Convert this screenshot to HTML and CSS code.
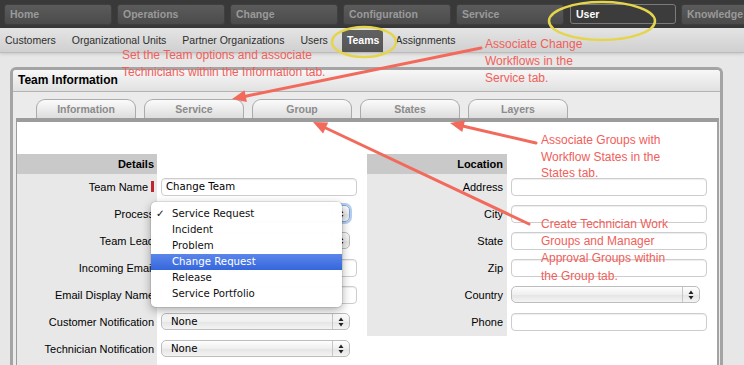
FILE: index.html
```html
<!DOCTYPE html>
<html>
<head>
<meta charset="utf-8">
<title>Team Information</title>
<link rel="stylesheet" href="styles.css">
</head>
<body>
<nav class="topnav">
  <a class="tnav">Home</a>
  <a class="tnav">Operations</a>
  <a class="tnav">Change</a>
  <a class="tnav">Configuration</a>
  <a class="tnav">Service</a>
  <a class="tnav active">User</a>
  <a class="tnav">Knowledge</a>
</nav>
<nav class="subnav">
  <a class="snav">Customers</a>
  <a class="snav">Organizational Units</a>
  <a class="snav">Partner Organizations</a>
  <a class="snav">Users</a>
  <a class="snav active">Teams</a>
  <a class="snav">Assignments</a>
</nav>
<main class="content">
  <section class="panel">
    <header class="panel-head">Team Information</header>
    <div class="panel-body">
      <div class="tabs">
        <div class="tab">Information</div>
        <div class="tab">Service</div>
        <div class="tab">Group</div>
        <div class="tab">States</div>
        <div class="tab">Layers</div>
      </div>
      <div class="tabpage">
        <div class="form">
          <div class="fgrid left">
            <div class="fhead">Details</div><div class="fblank"></div>
            <div class="flabel">Team Name<span class="req"></span></div>
            <div class="field"><div class="inp">Change Team</div></div>
            <div class="flabel">Process</div>
            <div class="field"><div class="sel focus">Service Request<svg class="arr" viewBox="0 0 6 10"><path d="M3 0.5L5.5 4H0.5Z M3 9.5L5.5 6H0.5Z"/></svg></div></div>
            <div class="flabel">Team Lead</div>
            <div class="field"><div class="sel"><svg class="arr" viewBox="0 0 6 10"><path d="M3 0.5L5.5 4H0.5Z M3 9.5L5.5 6H0.5Z"/></svg></div></div>
            <div class="flabel">Incoming Email</div>
            <div class="field"><div class="inp"></div></div>
            <div class="flabel">Email Display Name</div>
            <div class="field"><div class="inp"></div></div>
            <div class="flabel">Customer Notification</div>
            <div class="field"><div class="sel">None<svg class="arr" viewBox="0 0 6 10"><path d="M3 0.5L5.5 4H0.5Z M3 9.5L5.5 6H0.5Z"/></svg></div></div>
            <div class="flabel">Technician Notification</div>
            <div class="field"><div class="sel">None<svg class="arr" viewBox="0 0 6 10"><path d="M3 0.5L5.5 4H0.5Z M3 9.5L5.5 6H0.5Z"/></svg></div></div>
          </div>
          <div class="fgrid right">
            <div class="fhead">Location</div><div class="fblank"></div>
            <div class="flabel">Address</div>
            <div class="field"><div class="inp"></div></div>
            <div class="flabel">City</div>
            <div class="field"><div class="inp"></div></div>
            <div class="flabel">State</div>
            <div class="field"><div class="inp"></div></div>
            <div class="flabel">Zip</div>
            <div class="field"><div class="inp"></div></div>
            <div class="flabel">Country</div>
            <div class="field"><div class="sel"><svg class="arr" viewBox="0 0 6 10"><path d="M3 0.5L5.5 4H0.5Z M3 9.5L5.5 6H0.5Z"/></svg></div></div>
            <div class="flabel">Phone</div>
            <div class="field"><div class="inp"></div></div>
          </div>
        </div>
      </div>
    </div>
  </section>
</main>

<ul class="menu">
  <li class="mi"><span class="check">✓</span>Service Request</li>
  <li class="mi">Incident</li>
  <li class="mi">Problem</li>
  <li class="mi hl">Change Request</li>
  <li class="mi">Release</li>
  <li class="mi">Service Portfolio</li>
</ul>

<svg class="overlay" width="744" height="365" viewBox="0 0 744 365">
  <ellipse class="ring" cx="364" cy="42" rx="32" ry="15"/>
  <ellipse class="ring" cx="602" cy="21" rx="53" ry="19"/>
  <line class="arrow" x1="481" y1="48" x2="245.7" y2="96.2"/>
  <polygon class="head" points="232,99 244.5,90.3 246.9,102.1"/>
  <line class="arrow" x1="536" y1="143" x2="463.6" y2="126.2"/>
  <polygon class="head" points="450,123 465,120.3 462.3,132"/>
  <line class="arrow" x1="529" y1="224" x2="325.7" y2="128"/>
  <polygon class="head" points="313,122 328.2,122.6 323.1,133.4"/>
</svg>

<div class="note n1">Set the Team options and associate<br>Technicians within the Information tab.</div>
<div class="note n2">Associate Change<br>Workflows in the<br>Service tab.</div>
<div class="note n3">Associate Groups with<br>Workflow States in the<br>States tab.</div>
<div class="note n4">Create Technician Work<br>Groups and Manager<br>Approval Groups within<br>the Group tab.</div>
</body>
</html>
```

FILE: styles.css
```css
* { box-sizing: border-box; margin: 0; padding: 0; }
html, body { width: 744px; height: 365px; overflow: hidden; }
body {
  position: relative;
  background: #e7e7e7;
  font-family: "Liberation Sans", Arial, sans-serif;
  color: #111;
}

/* top navigation */
.topnav {
  display: flex;
  gap: 5px;
  height: 28px;
  padding: 4px 0 0 4px;
  background: #393939;
  overflow: hidden;
}
.tnav {
  flex: 0 0 108px;
  height: 21px;
  padding-left: 5px;
  border: 1px solid #3f3f3f;
  border-radius: 3px;
  background: linear-gradient(#5b5b5b, #4b4b4b);
  color: #9a9a9a;
  font-size: 10.5px;
  font-weight: bold;
  line-height: 19px;
}
.tnav.active {
  flex-basis: 106px;
  height: 20px;
  border: 1px solid #7b7b7b;
  background: #3c3c3c;
  color: #fff;
  margin-left: 1px;
}

/* sub navigation */
.subnav {
  display: flex;
  align-items: flex-end;
  height: 25px;
  background: linear-gradient(#e4e4e4, #d0d0d0);
  border-bottom: 1px solid #bcbcbc;
  box-shadow: 0 1px 3px rgba(0,0,0,0.15);
}
.snav {
  padding: 0 5px;
  margin-right: 6px;
  height: 22px;
  line-height: 20px;
  font-size: 10.5px;
  color: #2e2e2e;
}
.snav.active {
  margin-left: 3px;
  margin-right: 7px;
  padding: 0 4px 0 5px;
  background: linear-gradient(#616161, #555);
  color: #fff;
  font-weight: bold;
  border-radius: 3px 3px 0 0;
}

/* panel */
.content { padding: 14px 0 0 10px; }
.panel {
  width: 713px;
  height: 298px;
  overflow: hidden;
  border: 3px solid #a4a4a4;
  border-bottom: 0;
  border-radius: 6px 6px 0 0;
  background: #ebebeb;
}
.panel-head {
  height: 22px;
  padding-left: 5px;
  border-bottom: 1px solid #b3b3b3;
  background: linear-gradient(#f7f7f7, #e1e1e1);
  font-size: 12px;
  font-weight: bold;
  line-height: 21px;
  color: #000;
}
.panel-body { padding: 7px 1px 0 3px; }

.tabs {
  display: flex;
  gap: 8px;
  padding-left: 20px;
  height: 19px;
}
.tab {
  width: 100px;
  height: 19px;
  border: 1px solid #ababab;
  border-bottom: 0;
  border-radius: 9px 9px 0 0;
  background: linear-gradient(#fbfbfb, #dddddd);
  color: #8b8b8b;
  font-size: 10.5px;
  font-weight: bold;
  text-align: center;
  line-height: 19px;
}
.tabpage {
  height: 247px;
  overflow: hidden;
  padding-top: 32px;
  border-top: 4px solid #9c9c9c;
  border-left: 1px solid #9c9c9c;
  border-right: 2px solid #a3a3a3;
  background: #fff;
}

/* form */
.form { display: flex; align-items: flex-start; gap: 10px; }
.fgrid {
  display: grid;
  grid-template-columns: 140px 200px;
  grid-template-rows: 20px;
  grid-auto-rows: 27px;
}
.left {
  background: linear-gradient(to right, #e8e8e8 140px, transparent 140px);
  padding-bottom: 4px;
}
.fhead {
  background: #c9c9c9;
  font-size: 11px;
  font-weight: bold;
  text-align: right;
  padding-right: 3px;
  line-height: 20px;
  color: #000;
}
.fblank { background: #fff; }
.flabel {
  background: #e8e8e8;
  font-size: 11px;
  text-align: right;
  padding-right: 3px;
  line-height: 27px;
  color: #000;
  white-space: nowrap;
}
.right .flabel, .right .fhead { padding-right: 4px; }
.field { padding: 4px 0 0 4px; }

.req {
  display: inline-block;
  width: 3px;
  height: 11px;
  margin-left: 3px;
  vertical-align: -1px;
  background: #c0262c;
}

.inp {
  width: 196px;
  height: 18px;
  padding-left: 4px;
  border: 1px solid #cdcdcd;
  border-radius: 4px;
  background: #fff;
  box-shadow: inset 0 1px 1px rgba(0,0,0,0.07);
  font-family: "DejaVu Sans", sans-serif;
  font-size: 10.2px;
  line-height: 16px;
  color: #000;
}
.sel {
  position: relative;
  width: 189px;
  height: 17px;
  padding-left: 9px;
  border: 1px solid #bdbdbd;
  border-radius: 5px;
  background: linear-gradient(#fefefe, #efefef 50%, #e4e4e4 51%, #f4f4f4);
  font-family: "DejaVu Sans", sans-serif;
  font-size: 10.2px;
  line-height: 15px;
  color: #000;
}
.sel::before {
  content: "";
  position: absolute;
  top: 0;
  bottom: 0;
  right: 16px;
  width: 1px;
  background: #c6c6c6;
}
.sel.focus {
  border-color: #7ea7da;
  box-shadow: 0 0 0 2px rgba(120,165,225,0.55);
}
.arr {
  position: absolute;
  right: 5px;
  top: 3px;
  width: 6px;
  height: 10px;
  fill: #222;
}

/* dropdown menu */
.menu {
  position: absolute;
  left: 151px;
  top: 202px;
  width: 191px;
  height: 105px;
  padding-top: 4px;
  list-style: none;
  background: rgba(255,255,255,0.98);
  border-radius: 5px;
  box-shadow: 0 3px 10px rgba(0,0,0,0.35), 0 0 0 1px rgba(0,0,0,0.08);
}
.mi {
  position: relative;
  height: 16px;
  padding-left: 21px;
  font-family: "DejaVu Sans", sans-serif;
  font-size: 10.2px;
  line-height: 16px;
  color: #111;
}
.mi.hl {
  background: linear-gradient(#5b86ea, #3566dc);
  color: #fff;
}
.check {
  position: absolute;
  left: 5px;
  top: 0;
}

/* annotations */
.overlay {
  position: absolute;
  left: 0;
  top: 0;
  pointer-events: none;
}
.ring { fill: none; stroke: #e4d54b; stroke-width: 2.5; }
.arrow { stroke: #f26a5c; stroke-width: 3; stroke-linecap: round; }
.head { fill: #f26a5c; }

.note {
  position: absolute;
  color: #f0605a;
  font-size: 12px;
  line-height: 17px;
  white-space: nowrap;
}
.n1 { left: 122px; top: 47px; }
.n2 { left: 485px; top: 36px; }
.n3 { left: 541px; top: 132px; line-height: 16.7px; }
.n4 { left: 541px; top: 216px; line-height: 17.2px; }
```
